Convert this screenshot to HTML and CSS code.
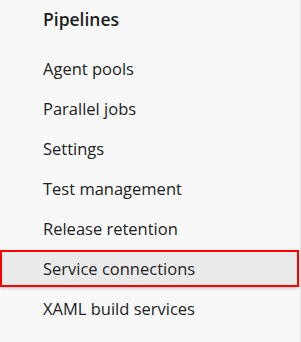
FILE: index.html
```html
<!DOCTYPE html>
<html lang="en">
<head>
    <meta charset="UTF-8">
    <title>Organization settings</title>
    <link rel="stylesheet" href="styles.css">
</head>
<body>
    <nav class="side-nav">
        <div class="nav-group">Pipelines</div>
        <a class="nav-item">Agent pools</a>
        <a class="nav-item">Parallel jobs</a>
        <a class="nav-item">Settings</a>
        <a class="nav-item">Test management</a>
        <a class="nav-item">Release retention</a>
        <a class="nav-item selected">Service connections</a>
        <a class="nav-item">XAML build services</a>
    </nav>
</body>
</html>
```

FILE: styles.css
```css
body {
    margin: 0;
    background-color: #f8f8f8;
    font-family: "Open Sans", "Noto Sans", sans-serif;
    color: #201f1e;
}

.side-nav {
    width: 300px;
    height: 342px;
    border-right: 1px solid #e6e6e6;
    display: flex;
    flex-direction: column;
}

.nav-group {
    height: 40px;
    padding-left: 43px;
    font-size: 17.5px;
    font-weight: 600;
    line-height: 39px;
    margin-bottom: 9px;
}

.nav-item {
    height: 40px;
    padding-left: 43px;
    font-size: 16.5px;
    line-height: 40px;
    cursor: pointer;
}

.nav-item.selected {
    height: 33px;
    line-height: 33px;
    margin: 1px 1px 2px 0;
    padding-left: 41px;
    background-color: #eaeaea;
    border: 2px solid #ff0000;
    box-shadow: 0 1px 3px rgba(0, 0, 0, 0.25);
}
```
